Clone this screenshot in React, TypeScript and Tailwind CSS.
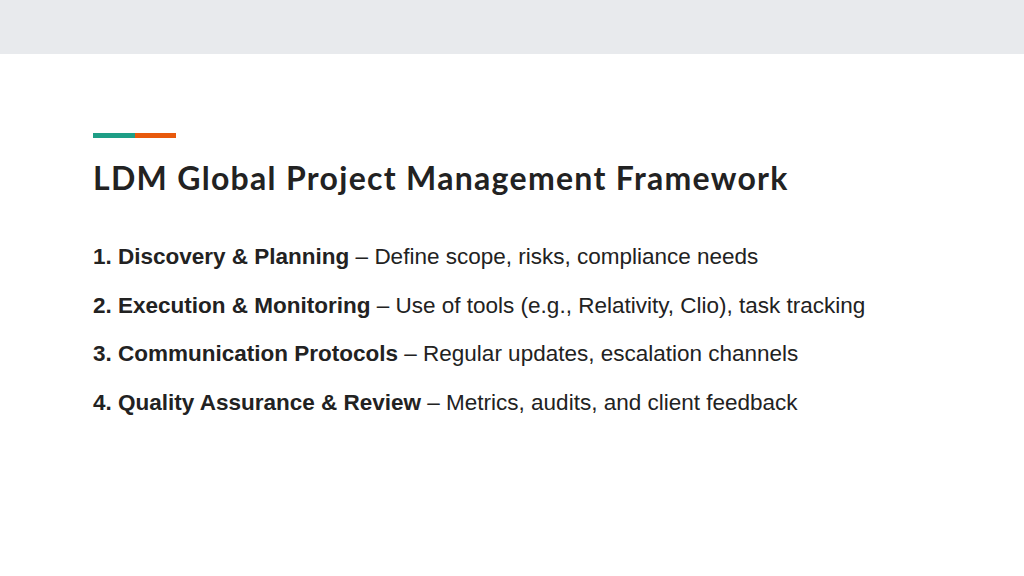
export default function App() {
  const items = [
    ["1. Discovery & Planning", "Define scope, risks, compliance needs"],
    ["2. Execution & Monitoring", "Use of tools (e.g., Relativity, Clio), task tracking"],
    ["3. Communication Protocols", "Regular updates, escalation channels"],
    ["4. Quality Assurance & Review", "Metrics, audits, and client feedback"],
  ];
  return (
    <div className="w-[1024px] h-[576px] bg-white flex flex-col overflow-hidden">
      <div className="h-[54px] bg-[#e8eaed] shrink-0" />
      <div className="pl-[93px] pt-[79px] flex flex-col">
        <div className="flex h-[5px] w-[83px]">
          <div className="w-[42px] bg-[#1e9e86]" />
          <div className="flex-1 bg-[#e8590c]" />
        </div>
        <h1 className="mt-[20px] text-[32px] leading-[40px] font-bold text-[#222222] tracking-[1.3px]" style={{ fontFamily: "Lato, 'Noto Sans', sans-serif" }}>
          LDM Global Project Management Framework
        </h1>
        <div className="mt-[46px] flex flex-col gap-[22.5px] text-[22.5px] leading-[26px] text-[#222222]" style={{ fontFamily: "'Liberation Sans', Arial, sans-serif" }}>
          {items.map(([b, r]) => (
            <div key={b}>
              <span className="font-bold">{b}</span> – {r}
            </div>
          ))}
        </div>
      </div>
    </div>
  );
}
